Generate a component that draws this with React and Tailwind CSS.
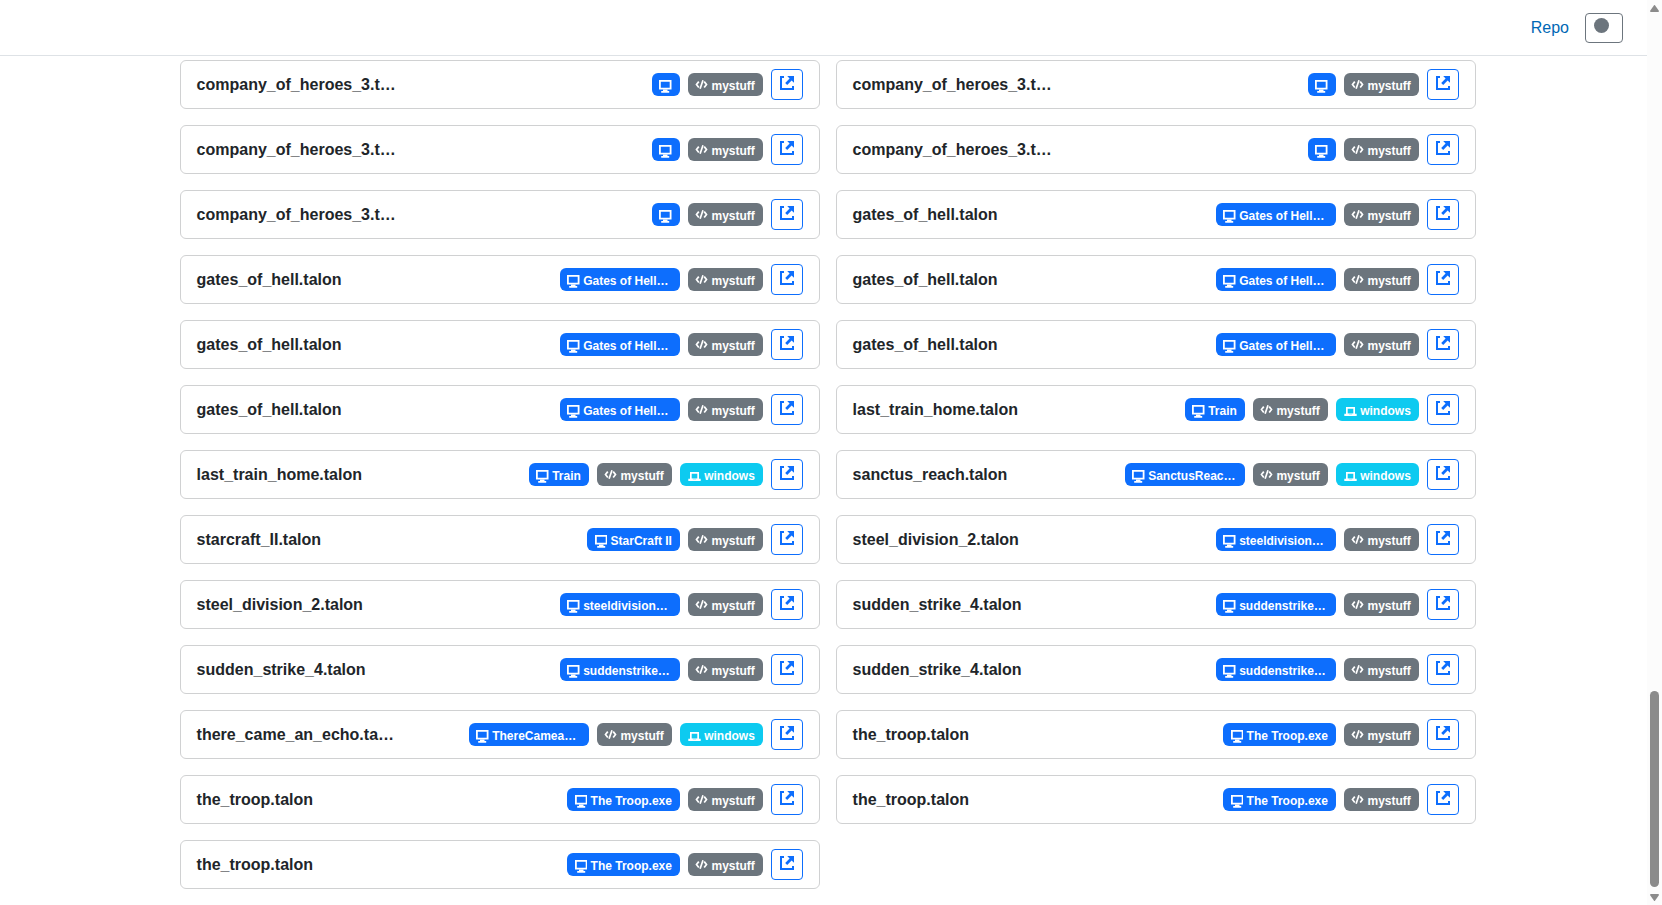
const goh = { name: "gates_of_hell.talon", app: "Gates of Hell…" };
const coh = { name: "company_of_heroes_3.t…", app: "" };
const troop = { name: "the_troop.talon", app: "The Troop.exe" };
const train = { name: "last_train_home.talon", app: "Train", os: "windows" };
const steel = { name: "steel_division_2.talon", app: "steeldivision…" };
const sudden = { name: "sudden_strike_4.talon", app: "suddenstrike…" };
const CARDS = [
  coh, coh, coh, coh, coh, goh, goh, goh, goh, goh, goh, train, train,
  { name: "sanctus_reach.talon", app: "SanctusReac…", os: "windows" },
  { name: "starcraft_II.talon", app: "StarCraft II" },
  steel, steel, sudden, sudden, sudden,
  { name: "there_came_an_echo.ta…", app: "ThereCamea…", os: "windows" },
  troop, troop, troop, troop,
];

const Monitor = () => (
  <svg className="mt-[3px] h-[14px] w-[12.5px] shrink-0" viewBox="0 0 12.5 14" fill="currentColor">
    <path fillRule="evenodd" d="M0 1h12.5v9.5H0zM1.8 2.7v6.1h8.9V2.7z" />
    <path d="M4 10.5h4.5V12h1.7v1.7h-8V12H4z" />
  </svg>
);
const Code = () => (
  <svg className="h-[12px] w-[13px] shrink-0" viewBox="0 0 13 12" fill="none" stroke="currentColor" strokeWidth="1.7">
    <path d="M3.8 2.6 1.5 5.5l2.3 3M9.2 2.6l2.3 2.9-2.3 3M8 1.2 5.1 9.8" />
  </svg>
);
const Laptop = () => (
  <svg className="mt-[3px] h-[12px] w-[13px] shrink-0" viewBox="0 0 13 12" fill="currentColor">
    <path fillRule="evenodd" d="M2 2h9v7.5H2zM3.7 3.7v4.8h5.6V3.7z" />
    <path d="M.3 8.7h4.2l.6.9h2.8l.6-.9h4.2V11H.3z" />
  </svg>
);
const External = () => (
  <svg className="h-[14px] w-[14px]" viewBox="0 0 14 14" fill="currentColor">
    <path d="M0 0h4v2H2v10h10V10h2v4H0z" />
    <path d="M7.2 0H14v6.8l-2.4-2.4-4.4 4.5-2-2 4.4-4.5z" />
  </svg>
);

const Badge = ({ color, icon, children }) => (
  <span className={`flex h-[23px] items-center whitespace-nowrap rounded-md text-[12px] leading-[12px] font-bold text-white ${color}`}>
    {icon}
    {children && <span className="mt-[2px] ml-[3.2px]">{children}</span>}
  </span>
);

function Card({ name, app, os }) {
  return (
    <div className="flex h-[49px] items-center justify-between rounded-md border border-[#d0d1d2] bg-white pr-4 pl-[15.6px]">
      <span className="whitespace-nowrap text-base font-bold">{name}</span>
      <div className="flex items-center gap-2">
        <span className={app.endsWith("…") ? "flex w-[120px] *:w-full" : "flex"}>
          <Badge color="bg-[#0d6efd] pl-[7.4px] pr-[8.2px]" icon={<Monitor />}>{app}</Badge>
        </span>
        <Badge color="bg-[#6c757d] pl-[7.2px] pr-[8.2px]" icon={<Code />}>mystuff</Badge>
        {os && <Badge color="bg-[#0dcaf0] pl-[8px] pr-[8.2px]" icon={<Laptop />}>{os}</Badge>}
        <button className="flex h-[31px] w-8 items-start rounded border border-[#0d6efd] pt-[6px] pl-[8px] text-[#0d6efd]">
          <External />
        </button>
      </div>
    </div>
  );
}

export default function App() {
  return (
    <div className="flex h-[905px] w-[1662px] overflow-hidden bg-white font-['Liberation_Sans',Arial,sans-serif] text-[#212529]">
      <div className="flex w-[1647px] flex-col">
        <header className="flex h-14 shrink-0 items-center justify-end gap-4 border-b border-[#dee2e6] pr-6">
          <a className="text-base text-[#0068b5]">Repo</a>
          <button className="mt-px flex h-[30px] w-[38px] items-start rounded border border-[#6c757d] pt-[4px] pl-[8px]">
            <span className="size-[15px] rounded-full bg-[#6c757d]" />
          </button>
        </header>
        <main className="ml-[180px] grid w-[1296px] grid-cols-2 gap-4 pt-1">
          {CARDS.map((c, i) => <Card key={i} {...c} />)}
        </main>
      </div>
      <div className="flex w-[15px] flex-col items-center bg-[#fcfcfc] text-[#8b8b8b]">
        <svg className="mt-[5px] h-[7px] w-[9px]" viewBox="0 0 9 7" fill="currentColor"><path d="M4 .3q.5-.5 1 0l4 5.7q0 1-1 1H1Q0 7 0 6z" /></svg>
        <div className="mt-[679px] h-[196px] w-[9px] rounded-full bg-[#8b8b8b]" />
        <svg className="mt-[7px] h-[7px] w-[9px]" viewBox="0 0 9 7" fill="currentColor"><path d="M4 6.7q.5.5 1 0L9 1q0-1-1-1H1Q0 0 0 1z" /></svg>
      </div>
    </div>
  );
}
